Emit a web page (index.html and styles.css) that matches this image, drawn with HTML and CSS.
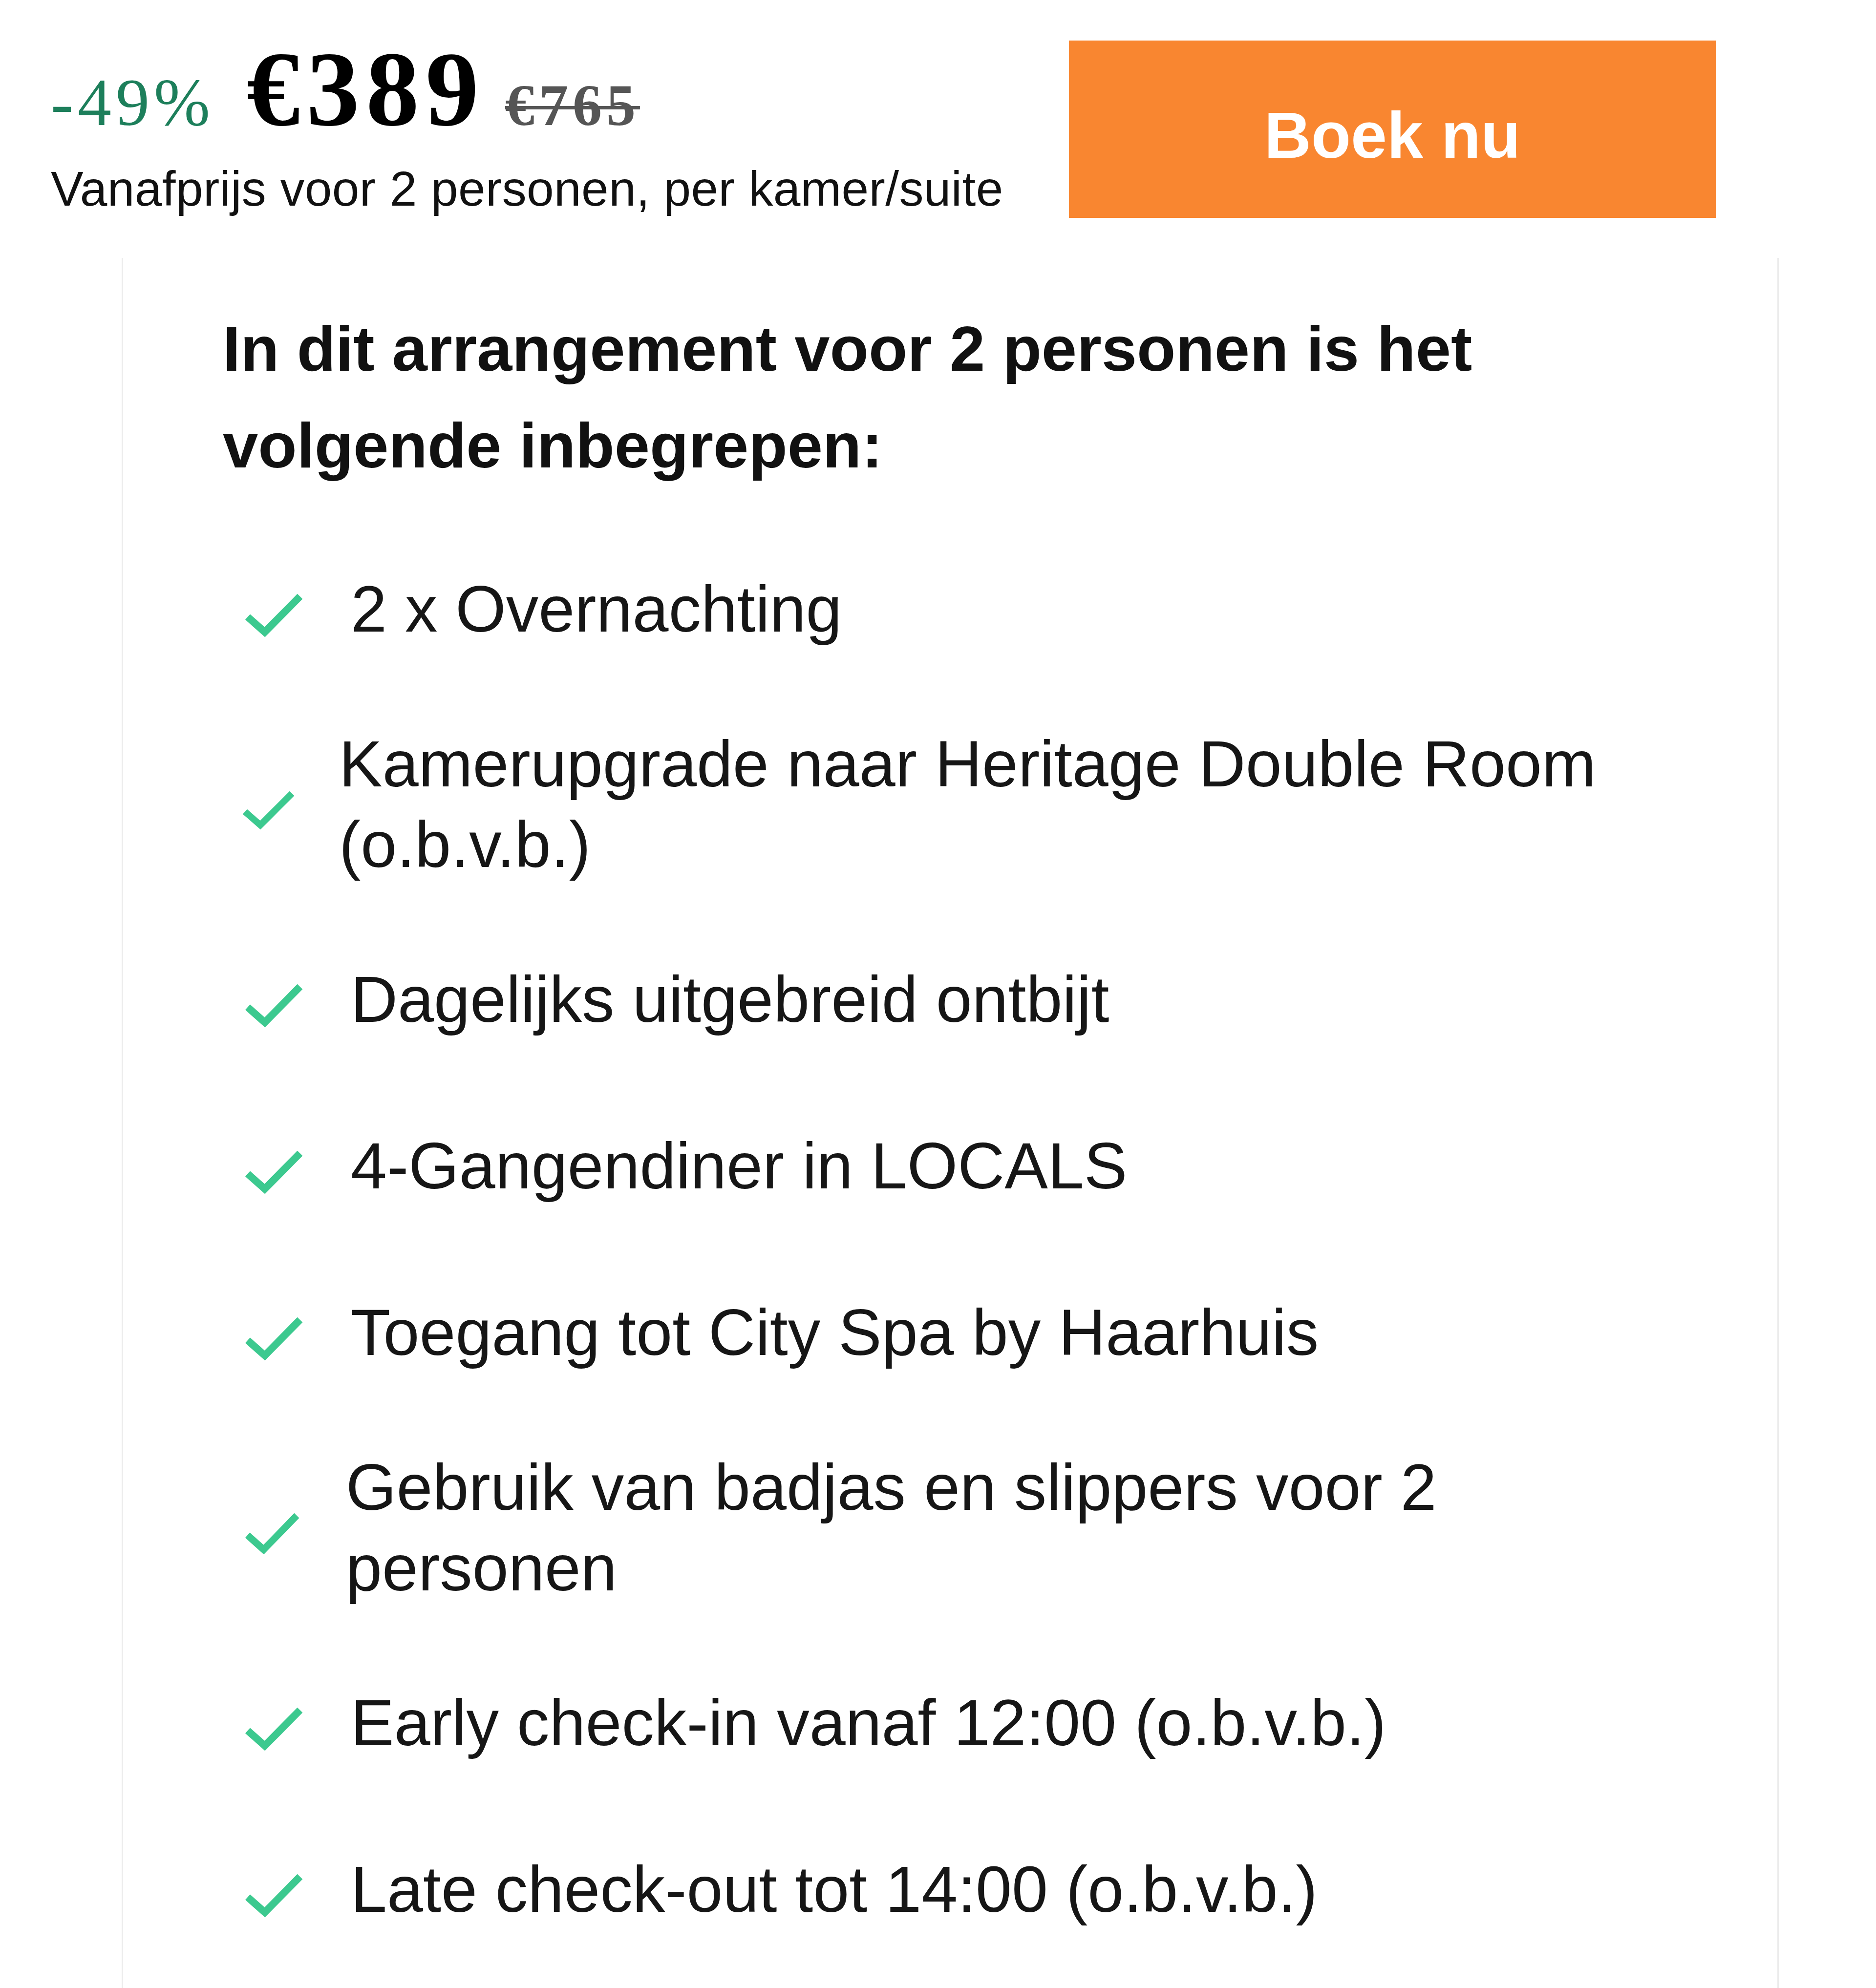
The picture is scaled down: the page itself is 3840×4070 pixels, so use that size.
FILE: index.html
```html
<!DOCTYPE html>
<html lang="nl">
<head>
<meta charset="utf-8">
<title>Arrangement</title>
<link rel="stylesheet" href="styles.css">
</head>
<body>
<div class="page">
  <header class="top">
    <div class="price-block">
      <div class="prices">
        <span class="discount">-49%</span>
        <span class="price">€389</span>
        <span class="old">€765</span>
      </div>
      <p class="note">Vanafprijs voor 2 personen, per kamer/suite</p>
    </div>
    <a class="book" href="#">Boek nu</a>
  </header>

  <section class="card">
    <h2 class="title">In dit arrangement voor 2 personen is het volgende inbegrepen:</h2>
    <ul class="list">
      <li class="item">
        <svg class="check" viewBox="0 0 119 88" aria-hidden="true"><polyline points="6,47 41,78 113,5"/></svg>
        <span class="label">2 x Overnachting</span>
      </li>
      <li class="item item-tight">
        <svg class="check" viewBox="0 0 119 88" preserveAspectRatio="none" aria-hidden="true"><polyline points="6,47 41,78 113,5"/></svg>
        <span class="label">Kamerupgrade naar Heritage Double Room (o.b.v.b.)</span>
      </li>
      <li class="item">
        <svg class="check" viewBox="0 0 119 88" aria-hidden="true"><polyline points="6,47 41,78 113,5"/></svg>
        <span class="label">Dagelijks uitgebreid ontbijt</span>
      </li>
      <li class="item">
        <svg class="check" viewBox="0 0 119 88" aria-hidden="true"><polyline points="6,47 41,78 113,5"/></svg>
        <span class="label">4-Gangendiner in LOCALS</span>
      </li>
      <li class="item">
        <svg class="check" viewBox="0 0 119 88" aria-hidden="true"><polyline points="6,47 41,78 113,5"/></svg>
        <span class="label">Toegang tot City Spa by Haarhuis</span>
      </li>
      <li class="item item-snug">
        <svg class="check" viewBox="0 0 119 88" preserveAspectRatio="none" aria-hidden="true"><polyline points="6,47 41,78 113,5"/></svg>
        <span class="label">Gebruik van badjas en slippers voor 2 personen</span>
      </li>
      <li class="item">
        <svg class="check" viewBox="0 0 119 88" aria-hidden="true"><polyline points="6,47 41,78 113,5"/></svg>
        <span class="label">Early check-in vanaf 12:00 (o.b.v.b.)</span>
      </li>
      <li class="item">
        <svg class="check" viewBox="0 0 119 88" aria-hidden="true"><polyline points="6,47 41,78 113,5"/></svg>
        <span class="label">Late check-out tot 14:00 (o.b.v.b.)</span>
      </li>
    </ul>
  </section>
</div>
</body>
</html>
```

FILE: styles.css
```css
html, body {
  margin: 0;
  padding: 0;
  background: #ffffff;
}

body {
  font-family: "Liberation Sans", Arial, sans-serif;
  color: #161616;
}

.page {
  width: 3840px;
  min-height: 4070px;
  overflow: hidden;
}

/* ---------- header ---------- */
.top {
  display: flex;
  justify-content: space-between;
  align-items: flex-start;
  padding: 74px 328px 0 104px;
}

.price-block {
  display: flex;
  flex-direction: column;
}

.prices {
  display: flex;
  align-items: baseline;
  font-family: "Liberation Serif", "Times New Roman", serif;
  line-height: 1;
}

.discount {
  font-size: 138px;
  font-weight: 400;
  color: #1d7f5b;
  letter-spacing: 9px;
  margin-right: 66px;
}

.price {
  font-size: 218px;
  font-weight: 700;
  color: #000000;
  letter-spacing: 13px;
  margin-right: 41px;
}

.old {
  font-size: 120px;
  font-weight: 700;
  color: #555555;
  letter-spacing: 9px;
  text-decoration: line-through;
  text-decoration-thickness: 7px;
}

.note {
  margin: 34px 0 0;
  font-size: 100px;
  line-height: 120px;
  letter-spacing: 0.4px;
  color: #111111;
  white-space: nowrap;
}

.book {
  flex: none;
  box-sizing: border-box;
  width: 1324px;
  height: 363px;
  margin-top: 9px;
  padding-top: 24px;
  display: flex;
  align-items: center;
  justify-content: center;
  background: #f98630;
  color: #ffffff;
  font-size: 133px;
  font-weight: 700;
  text-decoration: none;
}

/* ---------- card ---------- */
.card {
  box-sizing: border-box;
  width: 3392px;
  min-height: 3542px;
  margin: 82px 0 0 249px;
  padding: 87px 207px 0;
  border-left: 3px solid #ececec;
  border-right: 3px solid #ececec;
}

.title {
  margin: 0 0 0 -3px;
  font-size: 130px;
  line-height: 198px;
  font-weight: 700;
  color: #111111;
}

.list {
  list-style: none;
  margin: 130px 0 0;
  padding: 0 0 0 42px;
  display: flex;
  flex-direction: column;
  gap: 128px;
}

.item {
  display: flex;
  align-items: center;
  min-height: 213px;
}

.check {
  flex: none;
  width: 119px;
  height: 88px;
  margin: 24px 98px 0 0;
}

.check polyline {
  fill: none;
  stroke: #3cc98f;
  stroke-width: 15;
  stroke-linecap: butt;
  stroke-linejoin: miter;
}

.item-tight .check {
  width: 107px;
  height: 78px;
  margin-left: -5px;
  margin-right: 91px;
}

.item-snug .check {
  width: 112px;
  height: 84px;
  margin-right: 95px;
}

.label {
  font-size: 133px;
  line-height: 165px;
  color: #161616;
}
```
